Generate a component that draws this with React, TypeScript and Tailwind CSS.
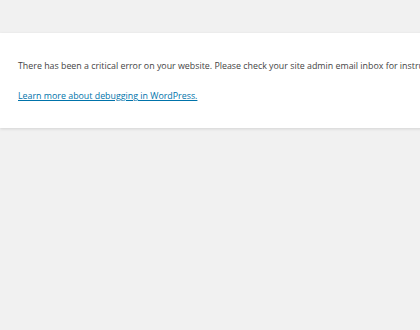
export default function App() {
  return (
    <div className="min-h-[330px] overflow-hidden bg-[#f1f1f1] pt-[33px] font-['Open_Sans',sans-serif]">
      <div className="w-[760px] bg-white pl-[18px] pt-[27px] pb-[25px] text-[8.85px] leading-[13px] text-[#444] shadow-[0_1px_3px_rgba(0,0,0,0.13)]">
        <p className="whitespace-nowrap">
          There has been a critical error on your website. Please check your site admin email inbox for instructions.
        </p>
        <p className="mt-[17px]">
          <a href="#" className="text-[#0073aa] underline">
            Learn more about debugging in WordPress.
          </a>
        </p>
      </div>
    </div>
  );
}
